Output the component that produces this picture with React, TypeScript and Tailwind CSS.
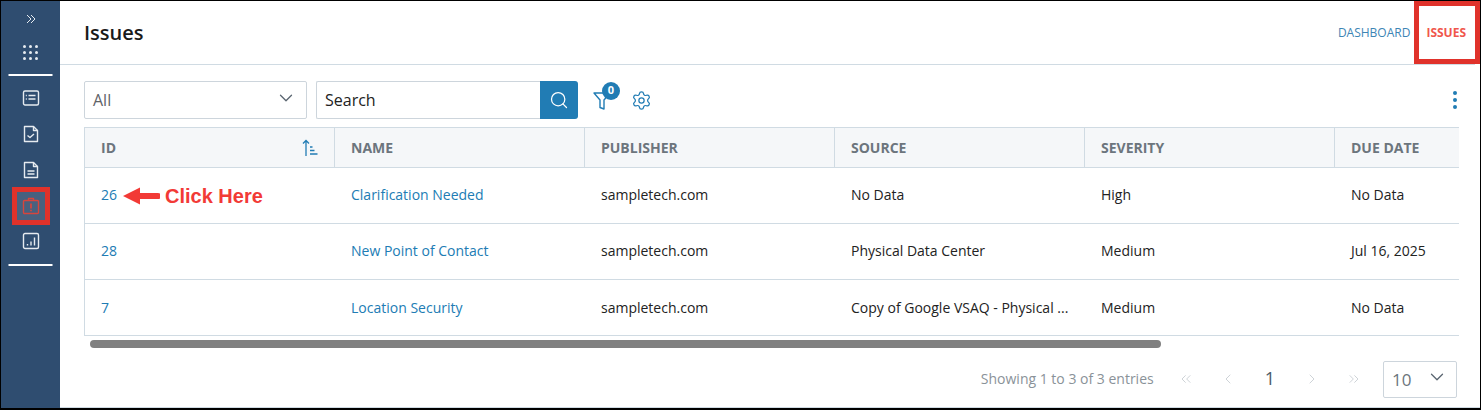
import { ChevronDown, ChevronsLeft, ChevronLeft, ChevronRight, ChevronsRight, Search, Settings } from "lucide-react";

const rows = [
  { id: "26", name: "Clarification Needed", source: "No Data", severity: "High", due: "No Data" },
  { id: "28", name: "New Point of Contact", source: "Physical Data Center", severity: "Medium", due: "Jul 16, 2025" },
  { id: "7", name: "Location Security", source: "Copy of Google VSAQ - Physical ...", severity: "Medium", due: "No Data" },
];

function NavIcon({ children }: { children: React.ReactNode }) {
  return (
    <svg width="18" height="18" viewBox="0 0 18 18" fill="none" stroke="currentColor" strokeWidth="1.4" strokeLinejoin="round">
      {children}
    </svg>
  );
}

function Sidebar() {
  return (
    <aside className="w-[59px] shrink-0 bg-[#2f4d70] flex flex-col items-center text-[#e6ebf0]">
      <div className="h-[35px] pt-[10px] flex justify-center">
        <svg width="10" height="10" viewBox="0 0 10 10" fill="none" stroke="currentColor" strokeWidth="1" className="mt-[3px]">
          <path d="M1 1l4 4-4 4M5 1l4 4-4 4" />
        </svg>
      </div>
      <div className="grid grid-cols-3 gap-[3px] w-[15px] mt-[9px] mb-[14px]">
        {Array.from({ length: 9 }).map((_, i) => (
          <span key={i} className="w-[3px] h-[3px] bg-[#e6ebf0] rounded-full" />
        ))}
      </div>
      <div className="w-[44px] h-[2px] bg-white -translate-x-[0.5px]" />
      <div className="flex flex-col items-center mt-[11px]">
        <div className="h-[38px] flex items-start pt-[2px]">
          <NavIcon>
            <rect x="1.5" y="2" width="15" height="14" rx="1.5" />
            <path d="M6.5 6.5h7M6.5 10h7M3.8 6.5h1M3.8 10h1" />
          </NavIcon>
        </div>
        <div className="h-[36px] flex items-start">
          <NavIcon>
            <path d="M2.5 1.5h9l4 4v11h-13z" />
            <path d="M11.5 1.5v4h4M5.5 10.5l2.5 2 4-3.5" />
          </NavIcon>
        </div>
        <div className="h-[31px] flex items-start">
          <NavIcon>
            <path d="M2.5 1.5h9l4 4v11h-13z" />
            <path d="M11.5 1.5v4h4M5.5 10h7M5.5 13h7" />
          </NavIcon>
        </div>
        <div className="w-[28px] h-[28px] bg-[#48617f] flex items-center justify-center text-[#d8453c]">
          <NavIcon>
            <rect x="1.5" y="3.5" width="15" height="13" rx="1" />
            <path d="M6.5 3.5V1.5h5v2" />
            <path d="M9 6.5v5M9 12.8v1.4" strokeWidth="1.7" />
          </NavIcon>
        </div>
        <div className="h-[36px] flex items-center mt-[3px]">
          <NavIcon>
            <rect x="1.5" y="1.5" width="15" height="15" rx="1.5" />
            <path d="M5.5 13.5v-1.5M9 13.5v-4M12.5 13.5V5.5" />
          </NavIcon>
        </div>
      </div>
      <div className="w-[44px] h-[2px] bg-white mt-[5px] -translate-x-[0.5px]" />
    </aside>
  );
}

function Header() {
  return (
    <header className="h-[64px] shrink-0 mr-[5px] border-b border-[#d0dbe3] flex items-center justify-between pt-[1px] pl-[24px] pr-[9px]">
      <h1 className="text-[20px] font-semibold text-[#1a1a1a]">Issues</h1>
      <nav className="flex items-center gap-[16px] text-[12px]">
        <a className="text-[#3d85b5]">DASHBOARD</a>
        <a className="text-[#f0564c] font-bold">ISSUES</a>
      </nav>
    </header>
  );
}

function Toolbar() {
  return (
    <div className="h-[62px] shrink-0 pt-[16px] pl-[24px] pr-[23px]">
      <div className="h-[38px] flex items-center">
        <div className="w-[223px] h-[38px] border border-[#cdd5dc] rounded-[2px] flex items-center justify-between pl-[8px] pr-[9px] text-[16px] text-[#5f6368]">
          <span>All</span>
          <ChevronDown size={22} strokeWidth={1.4} className="text-[#5a6570] -mt-[5px]" />
        </div>
        <div className="ml-[9px] w-[224px] h-[38px] border border-[#cdd5dc] border-r-0 rounded-l-[2px] flex items-center pl-[8px] text-[16px] text-[#222]">Search</div>
        <button className="w-[38px] h-[38px] bg-[#217cb4] rounded-r-[3px] flex items-center justify-center text-white">
          <Search size={20} strokeWidth={1.5} />
        </button>
        <div className="relative ml-[15px] text-[#217cb4]">
          <svg width="18" height="20" viewBox="0 0 18 20" fill="none" stroke="currentColor" strokeWidth="1.4" strokeLinejoin="round" className="mt-[1px]">
            <path d="M1 2h16l-6 7v9l-4-1.5V9z" />
          </svg>
          <span className="absolute -top-[8px] left-[9px] w-[18px] h-[18px] rounded-full bg-[#217cb4] text-white text-[11px] font-bold flex items-center justify-center">0</span>
        </div>
        <Settings size={21} strokeWidth={1.4} className="ml-[20px] text-[#217cb4]" />
        <div className="ml-auto flex flex-col gap-[3px]">
          <span className="w-[4px] h-[4px] rounded-full bg-[#217cb4]" />
          <span className="w-[4px] h-[4px] rounded-full bg-[#217cb4]" />
          <span className="w-[4px] h-[4px] rounded-full bg-[#217cb4]" />
        </div>
      </div>
    </div>
  );
}

function Th({ label, children }: { label: string; children?: React.ReactNode }) {
  return (
    <div className="w-[250px] shrink-0 h-full border-r border-[#d0dbe3] last:border-r-0 flex items-center justify-between pl-[16px] pr-[15px] text-[14px] font-bold text-[#6c757d]">
      {label}
      {children}
    </div>
  );
}

function Table() {
  return (
    <div className="ml-[24px] w-[1375px] h-[209px] border border-[#d0dbe3] border-r-0 overflow-hidden shrink-0">
      <div className="w-[1500px] h-[40px] bg-[#f5f7f9] border-b border-[#d0dbe3] flex">
        <Th label="ID">
          <svg width="17" height="18" viewBox="0 0 17 18" fill="none" stroke="#217cb4" strokeWidth="1.3">
            <path d="M4 17V1.5M1 4.5l3-3 3 3M8 8h2.5M8 11.5h4.5M8 15h7.5" />
          </svg>
        </Th>
        <Th label="NAME" />
        <Th label="PUBLISHER" />
        <Th label="SOURCE" />
        <Th label="SEVERITY" />
        <Th label="DUE DATE" />
      </div>
      {rows.map((r) => (
        <div key={r.id} className="w-[1500px] h-[56px] pb-[2px] border-b border-[#d0dbe3] last:border-b-0 flex items-center text-[14px] text-[#222]">
          <a className="w-[250px] pl-[16px] text-[#217cb4]">{r.id}</a>
          <a className="w-[250px] pl-[16px] text-[#217cb4]">{r.name}</a>
          <span className="w-[250px] pl-[16px]">sampletech.com</span>
          <span className="w-[250px] pl-[16px]">{r.source}</span>
          <span className="w-[250px] pl-[16px]">{r.severity}</span>
          <span className="w-[250px] pl-[16px]">{r.due}</span>
        </div>
      ))}
    </div>
  );
}

function Footer() {
  return (
    <div className="flex items-center justify-end pr-[23px] mt-[13px] text-[#8a9299]">
      <div className="flex items-center pb-[2px]">
        <span className="text-[14px] mr-[24px]">Showing 1 to 3 of 3 entries</span>
        <ChevronsLeft size={16} strokeWidth={1} className="text-[#b5bcc2]" />
        <ChevronLeft size={16} strokeWidth={1} className="ml-[26px] text-[#b5bcc2]" />
        <span className="ml-[29px] text-[18px] text-[#4a5a68]">1</span>
        <ChevronRight size={16} strokeWidth={1} className="ml-[29px] text-[#b5bcc2]" />
        <ChevronsRight size={16} strokeWidth={1} className="ml-[26px] text-[#b5bcc2]" />
      </div>
      <div className="ml-[21px] w-[74px] h-[37px] border border-[#cdd5dc] rounded-[2px] flex items-center justify-between pl-[8px] pr-[8px] text-[17px] text-[#6c757d]">
        <span>10</span>
        <ChevronDown size={22} strokeWidth={1.4} className="text-[#5a6570] -mt-[6px]" />
      </div>
    </div>
  );
}

export default function App() {
  return (
    <div className="relative w-[1481px] h-[410px] overflow-hidden bg-white border-t border-l border-r border-black border-b-2 flex font-['Open_Sans',sans-serif]">
      <Sidebar />
      <main className="flex-1 flex flex-col min-w-0 border-b border-[#d0dbe3]">
        <Header />
        <Toolbar />
        <Table />
        <div className="ml-[30px] w-[1071px] h-[8px] rounded-full bg-[#808080] mt-[4px]" />
        <Footer />
      </main>
      {/* annotations */}
      <div className="absolute left-[11px] top-[186px] w-[38px] h-[38px] border-[5px] border-[#e0322b]" />
      <div className="absolute left-[1413px] top-0 w-[66px] h-[63px] border-[5px] border-[#e0322b]" />
      <div className="absolute left-[122px] top-[180px] flex items-center gap-[5px] text-[#f23a36]">
        <svg width="37" height="18" viewBox="0 0 37 18">
          <path d="M0 9L17 0.5V6h18a3 3 0 010 6H17v5.5z" fill="currentColor" />
        </svg>
        <span className="text-[20px] font-bold font-['Liberation_Sans',sans-serif]">Click Here</span>
      </div>
    </div>
  );
}
